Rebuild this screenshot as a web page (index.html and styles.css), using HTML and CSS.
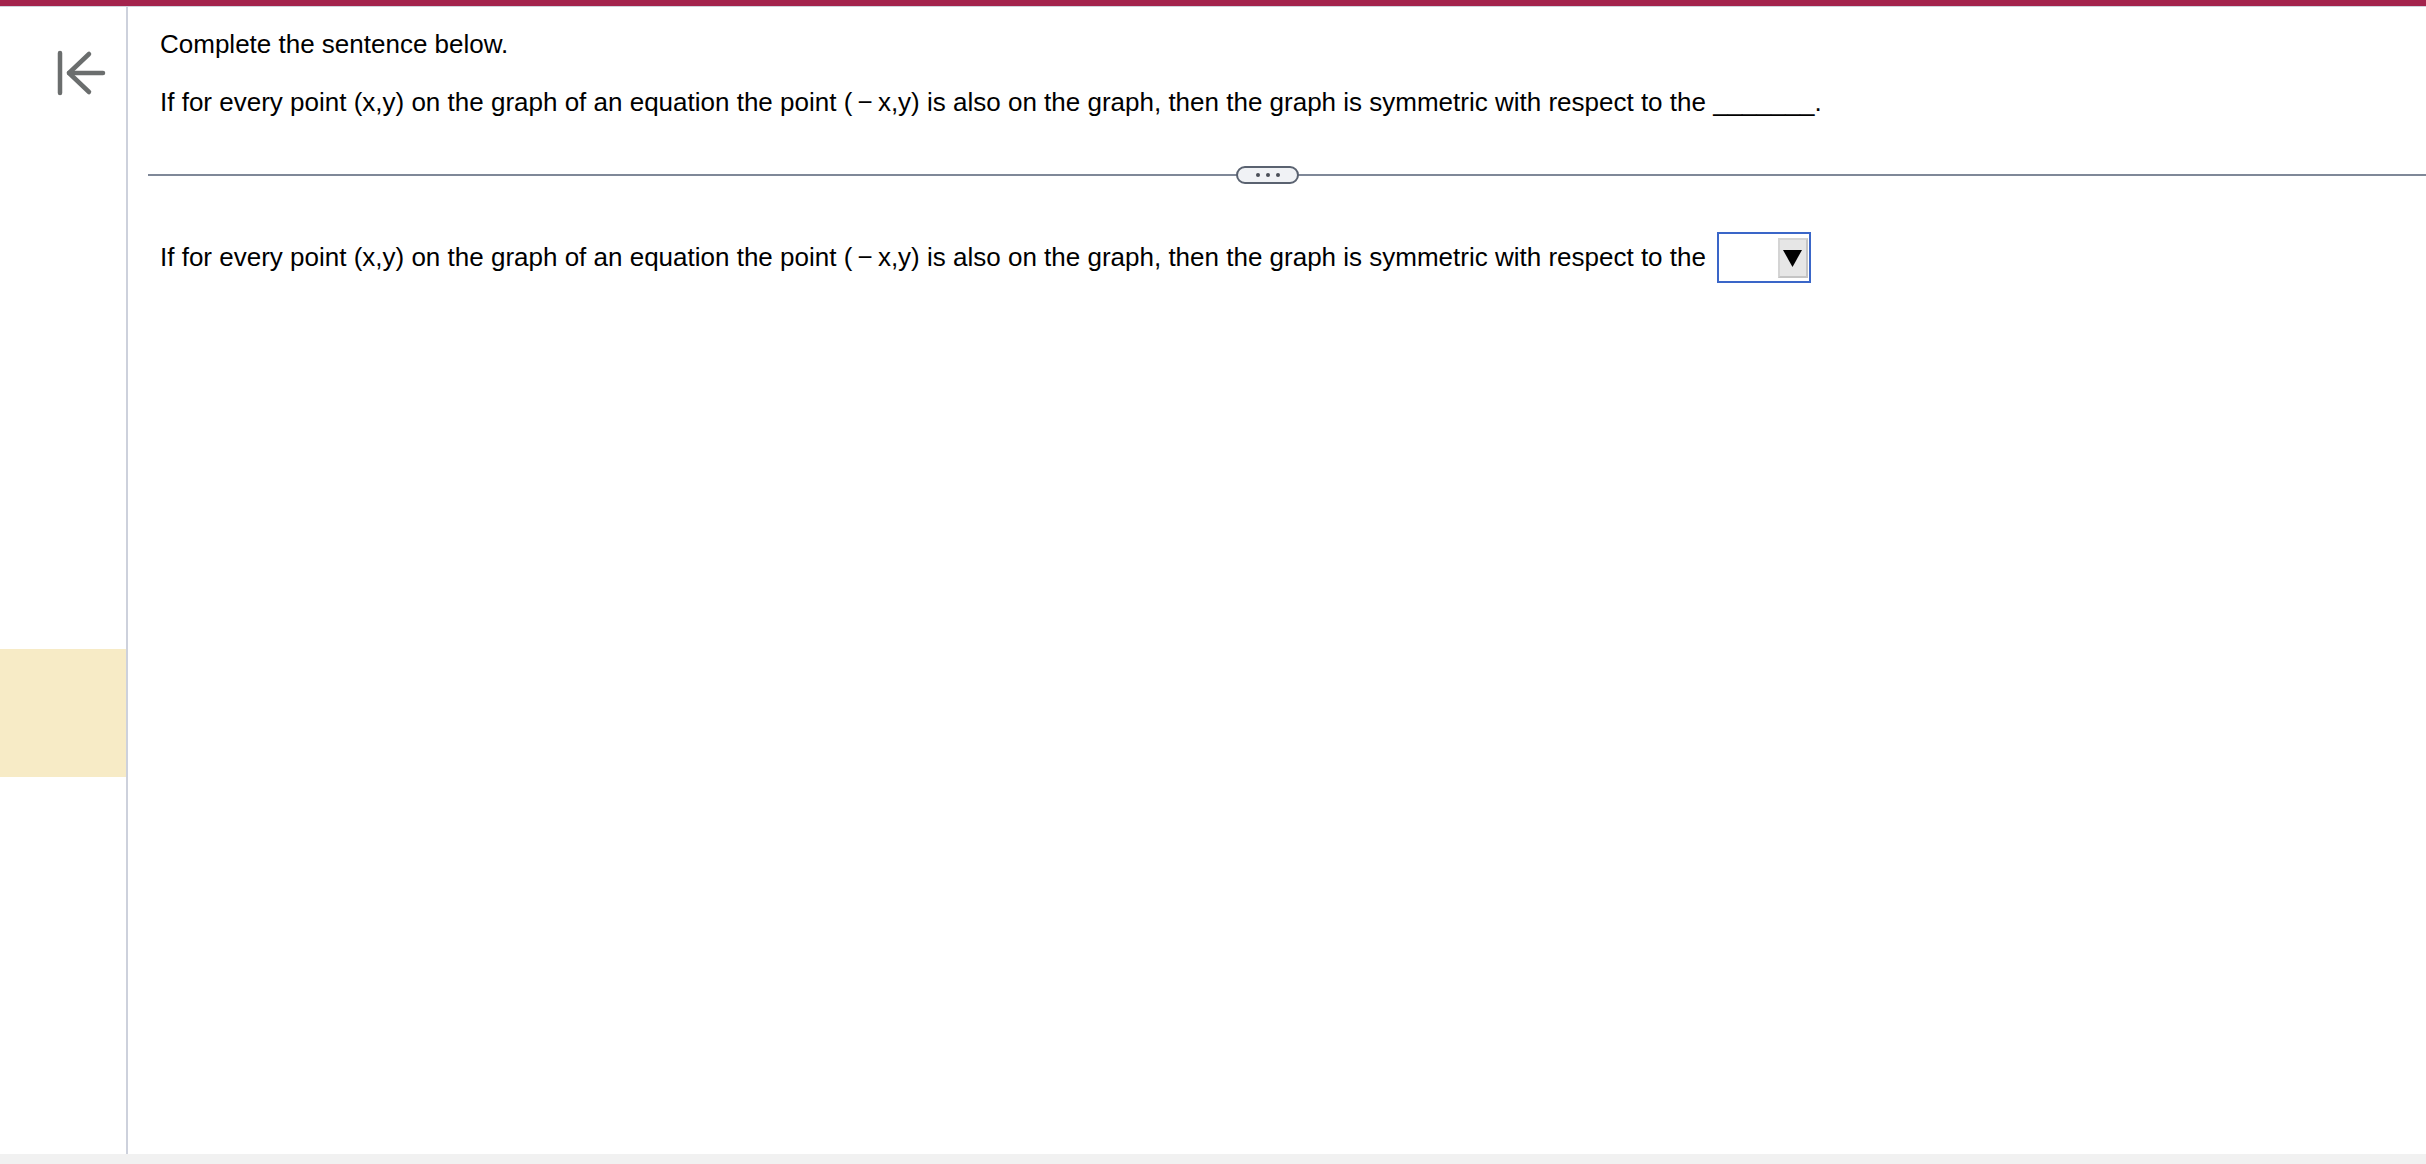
FILE: index.html
```html
<!DOCTYPE html>
<html>
<head>
<meta charset="utf-8">
<link rel="stylesheet" href="styles.css">
</head>
<body>
<div class="topbar"></div>
<div class="main">
  <aside class="sidebar">
    <button class="back" aria-label="Collapse">
      <svg width="50" height="46" viewBox="0 0 50 46">
        <line x1="3" y1="3" x2="3" y2="43" stroke="#6b6e6e" stroke-width="4.5" stroke-linecap="round"/>
        <line x1="12" y1="23" x2="46" y2="23" stroke="#6b6e6e" stroke-width="4.5" stroke-linecap="round"/>
        <polyline points="32,4 12,23 32,42" fill="none" stroke="#6b6e6e" stroke-width="4.5" stroke-linecap="round" stroke-linejoin="round"/>
      </svg>
    </button>
    <div class="highlight"></div>
  </aside>
  <section class="content">
    <p class="line first">Complete the sentence below.</p>
    <p class="line">If for every point (x,y) on the graph of an equation the point (&thinsp;&minus;&thinsp;x,y) is also on the graph, then the graph is symmetric with respect to the <span class="blank">_______</span>.</p>
    <div class="divider">
      <button class="more"><span></span><span></span><span></span></button>
    </div>
    <div class="line answer">
      <span class="answer-text">If for every point (x,y) on the graph of an equation the point (&thinsp;&minus;&thinsp;x,y) is also on the graph, then the graph is symmetric with respect to the</span>
      <span class="select">
        <span class="arrow">
          <svg width="19" height="17" viewBox="0 0 19 17"><polygon points="0,0 19,0 9.5,17" fill="#000"/></svg>
        </span>
      </span>
    </div>
  </section>
</div>
<div class="footer"></div>
</body>
</html>
```
FILE: styles.css
```css
html, body {
  margin: 0;
  padding: 0;
  background: #ffffff;
}
body {
  font-family: "Liberation Sans", Arial, sans-serif;
  color: #000;
  height: 1164px;
  display: flex;
  flex-direction: column;
  overflow: hidden;
}
.topbar {
  height: 6px;
  background: #a3234c;
  border-bottom: 1px solid #d0d3dc;
  flex: none;
}
.main {
  flex: 1;
  display: flex;
  min-height: 0;
}
.sidebar {
  width: 126px;
  flex: none;
  border-right: 2px solid #cdd1dc;
  display: flex;
  flex-direction: column;
}
.back {
  margin: 43px 0 0 57px;
  padding: 0;
  border: 0;
  background: none;
  width: 50px;
  height: 46px;
  line-height: 0;
}
.highlight {
  margin-top: 553px;
  height: 128px;
  background: #f7ebc6;
}
.content {
  flex: 1;
  padding-left: 20px;
}
.line {
  margin: 0;
  padding-left: 12px;
  font-size: 26px;
  line-height: 30px;
}
.first {
  margin-top: 22px;
  margin-bottom: 28px;
}
.divider {
  position: relative;
  margin-top: 57px;
  height: 2px;
  background: #7f8898;
}
.more {
  position: absolute;
  left: 1088px;
  top: -8px;
  width: 63px;
  height: 18px;
  box-sizing: border-box;
  border: 2px solid #5a6270;
  border-radius: 9px;
  background: #f0f2f5;
  padding: 0;
  display: flex;
  align-items: center;
  justify-content: center;
  gap: 6px;
}
.more span {
  width: 4px;
  height: 4px;
  border-radius: 50%;
  background: #4a4f57;
}
.answer {
  margin-top: 56px;
  display: flex;
  align-items: flex-start;
  white-space: nowrap;
}
.answer-text {
  padding-top: 10px;
}
.select {
  display: flex;
  justify-content: flex-end;
  align-items: flex-start;
  margin-left: 11px;
  width: 94px;
  height: 51px;
  box-sizing: border-box;
  border: 2px solid #3a66c8;
  padding: 4px 1px 0 0;
}
.arrow {
  display: flex;
  align-items: center;
  justify-content: center;
  width: 30px;
  height: 40px;
  box-sizing: border-box;
  background: #e6e6e6;
  border: 2px solid #c4c4c4;
  border-top-color: #d4d4d4;
  border-left-color: #d4d4d4;
}
.footer {
  height: 10px;
  background: #f1f1f1;
  flex: none;
}
```
